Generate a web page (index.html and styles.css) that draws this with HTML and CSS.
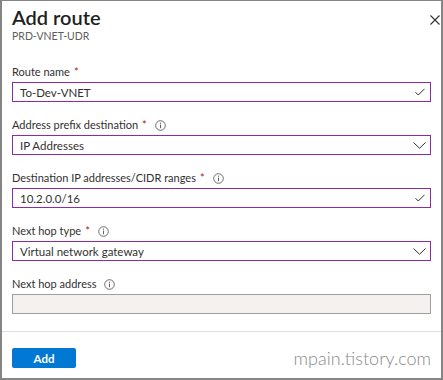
FILE: index.html
```html
<!DOCTYPE html>
<html>
<head>
<meta charset="utf-8">
<link rel="stylesheet" href="styles.css">
</head>
<body>
<div class="panel">
  <div class="header">
    <div class="titles">
      <h1 class="title">Add route</h1>
      <div class="subtitle">PRD-VNET-UDR</div>
    </div>
    <button class="close" aria-label="Close">
      <svg width="10" height="10" viewBox="0 0 10 10"><path d="M0.5 0.5L9.5 9.5M9.5 0.5L0.5 9.5" stroke="#323130" stroke-width="1.1" fill="none"/></svg>
    </button>
  </div>
  <div class="body">
    <div class="field">
      <div class="label"><span>Route name</span><span class="req">*</span></div>
      <div class="input active"><span class="value">To-Dev-VNET</span>
        <svg class="check" width="10" height="8" viewBox="0 0 10 8"><path d="M0.5 4.2L3.3 7L9.5 0.8" stroke="#323130" stroke-width="1" fill="none"/></svg>
      </div>
    </div>
    <div class="field">
      <div class="label"><span>Address prefix destination</span><span class="req">*</span><svg class="info" width="11" height="11" viewBox="0 0 11 11"><circle cx="5.5" cy="5.5" r="4.8" stroke="#605e5c" stroke-width="0.9" fill="none"/><path d="M5.5 4.6V8.2" stroke="#605e5c" stroke-width="1"/><circle cx="5.5" cy="3.2" r="0.6" fill="#605e5c"/></svg></div>
      <div class="input active"><span class="value">IP Addresses</span>
        <svg class="chev" width="13" height="7" viewBox="0 0 13 7"><path d="M0.5 0.5L6.5 6.3L12.5 0.5" stroke="#323130" stroke-width="1" fill="none"/></svg>
      </div>
    </div>
    <div class="field">
      <div class="label"><span>Destination IP addresses/CIDR ranges</span><span class="req">*</span><svg class="info" width="11" height="11" viewBox="0 0 11 11"><circle cx="5.5" cy="5.5" r="4.8" stroke="#605e5c" stroke-width="0.9" fill="none"/><path d="M5.5 4.6V8.2" stroke="#605e5c" stroke-width="1"/><circle cx="5.5" cy="3.2" r="0.6" fill="#605e5c"/></svg></div>
      <div class="input active"><span class="value">10.2.0.0/16</span>
        <svg class="check" width="10" height="8" viewBox="0 0 10 8"><path d="M0.5 4.2L3.3 7L9.5 0.8" stroke="#323130" stroke-width="1" fill="none"/></svg>
      </div>
    </div>
    <div class="field">
      <div class="label"><span>Next hop type</span><span class="req">*</span><svg class="info" width="11" height="11" viewBox="0 0 11 11"><circle cx="5.5" cy="5.5" r="4.8" stroke="#605e5c" stroke-width="0.9" fill="none"/><path d="M5.5 4.6V8.2" stroke="#605e5c" stroke-width="1"/><circle cx="5.5" cy="3.2" r="0.6" fill="#605e5c"/></svg></div>
      <div class="input active"><span class="value">Virtual network gateway</span>
        <svg class="chev" width="13" height="7" viewBox="0 0 13 7"><path d="M0.5 0.5L6.5 6.3L12.5 0.5" stroke="#323130" stroke-width="1" fill="none"/></svg>
      </div>
    </div>
    <div class="field">
      <div class="label"><span>Next hop address</span><svg class="info" width="11" height="11" viewBox="0 0 11 11"><circle cx="5.5" cy="5.5" r="4.8" stroke="#605e5c" stroke-width="0.9" fill="none"/><path d="M5.5 4.6V8.2" stroke="#605e5c" stroke-width="1"/><circle cx="5.5" cy="3.2" r="0.6" fill="#605e5c"/></svg></div>
      <div class="input disabled"></div>
    </div>
  </div>
  <div class="divider"></div>
  <div class="footer">
    <button class="btn">Add</button>
    <span class="watermark">mpain.tistory.com</span>
  </div>
</div>
</body>
</html>
```
FILE: styles.css
```css
* { box-sizing: border-box; }
html, body { margin: 0; padding: 0; background: #fff; }
body { font-family: Lato, "Noto Sans", sans-serif; color: #323130; }
.panel {
  width: 443px;
  height: 380px;
  border: 2px solid #858585;
  border-top-width: 1px;
  display: flex;
  flex-direction: column;
}
.header {
  display: flex;
  justify-content: space-between;
  align-items: flex-start;
  padding: 4px 0 0 10px;
}
.title {
  margin: 0;
  font-size: 20px;
  line-height: 24px;
  font-weight: 600;
  color: #201f1e;
}
.subtitle {
  font-size: 10.5px;
  line-height: 14px;
  color: #605e5c;
}
.close {
  border: 0;
  background: none;
  padding: 0;
  margin-top: 10px;
  width: 11px;
  height: 10px;
  display: flex;
}
.body {
  padding: 21px 10px 0 10px;
  display: flex;
  flex-direction: column;
  gap: 15px;
}
.field { display: flex; flex-direction: column; gap: 2px; }
.label {
  font-size: 11px;
  line-height: 16px;
  height: 16px;
  color: #323130;
  display: flex;
  align-items: center;
}
.req { color: #a4262c; margin-left: 4px; }
.info { margin-left: 8px; }
.input {
  height: 20px;
  border: 1px solid #8a2da5;
  display: flex;
  align-items: center;
  justify-content: space-between;
  padding: 0 5px 0 7px;
  font-size: 11.5px;
}
.input.disabled { border-color: #a19f9d; background: #f3f2f1; }
.chev { margin-right: -1px; }
.divider { height: 1px; background: #e1dfdd; margin-top: 17px; }
.footer {
  display: flex;
  justify-content: space-between;
  align-items: center;
  padding: 16px 10px 0 10px;
}
.btn {
  width: 64px;
  height: 20px;
  border: 0;
  border-radius: 2px;
  background: #0078d4;
  color: #fff;
  font-family: Lato, sans-serif;
  font-size: 11.5px;
  font-weight: 700;
  padding: 0;
}
.watermark {
  font-size: 18px;
  font-weight: 300;
  color: #8a8a8a;
  line-height: 20px;
}
```
